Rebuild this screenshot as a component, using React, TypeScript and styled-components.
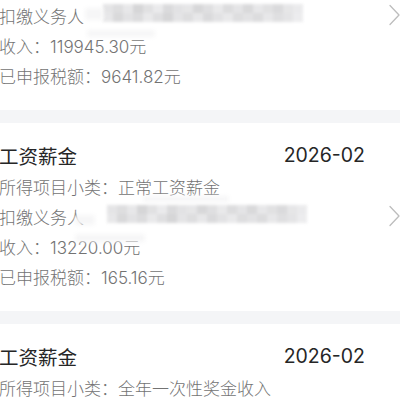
import React from "react";
import styled, { createGlobalStyle } from "styled-components";

const Global = createGlobalStyle`
  html, body { margin: 0; padding: 0; background: #ffffff; }
  body { font-family: Inter, "Noto Sans CJK SC", "Noto Sans", sans-serif; overflow: hidden; }
`;

const Page = styled.div`
  display: flex;
  flex-direction: column;
  width: 400px;
  background: #f4f5f7;
  gap: 13px;
`;

const Card = styled.div<{ $continued?: boolean }>`
  display: flex;
  flex-direction: column;
  background: #ffffff;
  padding: ${(p) => (p.$continued ? "0" : "16px")} 0 20px 0;
  margin-left: -1px;
`;

const TitleRow = styled.div`
  display: flex;
  justify-content: space-between;
  align-items: center;
  height: 32px;
  padding-right: 35px;
  font-size: 19.5px;
  font-weight: 400;
  color: #262626;
`;

const Row = styled.div`
  position: relative;
  display: flex;
  align-items: center;
  height: 30px;
  font-size: 17px;
  font-weight: 300;
  color: #737373;
  white-space: nowrap;
`;

const Spacer = styled.div`
  flex: 1;
`;

const Mosaic = styled.div<{ $left: number }>`
  position: absolute;
  left: ${(p) => p.$left}px;
  top: 4px;
  display: grid;
  grid-template-columns: repeat(20, 10px);
  grid-auto-rows: 9px;
  filter: blur(1.6px);
  opacity: 0.8;
`;

const Cell = styled.div<{ $shade: number }>`
  background: rgb(${(p) => p.$shade}, ${(p) => p.$shade}, ${(p) => p.$shade + 2});
`;

const Smear = styled.div<{ $left: number; $top: number; $w: number; $h: number }>`
  position: absolute;
  left: ${(p) => p.$left}px;
  top: ${(p) => p.$top}px;
  width: ${(p) => p.$w}px;
  height: ${(p) => p.$h}px;
  background: rgba(245, 245, 247, 0.95);
  filter: blur(2px);
`;

const Chevron = styled.svg`
  width: 12px;
  height: 22px;
  flex: none;
`;

const shades = [
  222, 214, 226, 204, 218, 230, 210, 220, 224, 206, 216, 228, 212, 222, 208, 226, 218, 210, 224, 230,
  226, 208, 220, 212, 228, 216, 204, 222, 214, 226, 210, 220, 228, 214, 220, 212, 226, 216, 222, 232,
];

function Redacted({ left }: { left: number }) {
  return (
    <Mosaic $left={left}>
      {shades.map((s, i) => (
        <Cell key={i} $shade={s} />
      ))}
    </Mosaic>
  );
}

function Arrow() {
  return (
    <Chevron viewBox="0 0 12 22">
      <path d="M2 1.5 L11 11 L2 20.5" fill="none" stroke="#bdbdbd" strokeWidth="1.3" strokeLinecap="round" strokeLinejoin="round" />
    </Chevron>
  );
}

export default function App() {
  return (
    <>
      <Global />
      <Page>
        <Card $continued>
          <Row>
            扣缴义务人
            <Redacted left={104} />
            <Smear $left={86} $top={8} $w={18} $h={12} />
            <Spacer />
            <Arrow />
          </Row>
          <Row>
            收入：119945.30元
            <Smear $left={88} $top={0} $w={68} $h={7} />
          </Row>
          <Row>已申报税额：9641.82元</Row>
        </Card>
        <Card>
          <TitleRow>
            <span>工资薪金</span>
            <span>2026-02</span>
          </TitleRow>
          <Row>所得项目小类：正常工资薪金</Row>
          <Row>
            扣缴义务人
            <Smear $left={144} $top={-5} $w={86} $h={6} />
            <Redacted left={108} />
            <Smear $left={76} $top={14} $w={20} $h={10} />
            <Spacer />
            <Arrow />
          </Row>
          <Row>
            收入：13220.00元
            <Smear $left={76} $top={3} $w={70} $h={8} />
          </Row>
          <Row>已申报税额：165.16元</Row>
        </Card>
        <Card>
          <TitleRow>
            <span>工资薪金</span>
            <span>2026-02</span>
          </TitleRow>
          <Row>所得项目小类：全年一次性奖金收入</Row>
        </Card>
      </Page>
    </>
  );
}
